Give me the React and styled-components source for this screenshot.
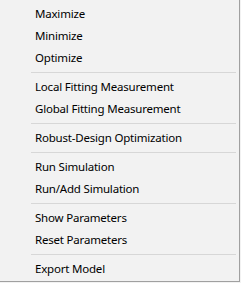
import React from "react";
import styled, { createGlobalStyle } from "styled-components";

const GlobalStyle = createGlobalStyle`
  html, body {
    margin: 0;
    padding: 0;
    background: #f2f2f2;
  }
`;

const Menu = styled.div`
  width: 240px;
  height: 282px;
  box-sizing: border-box;
  background: #f2f2f2;
  border-right: 1px solid #a0a0a0;
  border-bottom: 1px solid #a0a0a0;
  padding-top: 3px;
  font-family: "Noto Sans", "Open Sans", sans-serif;
  font-size: 11.5px;
  letter-spacing: -0.2px;
  color: #000;
`;

const Item = styled.div`
  height: 22px;
  box-sizing: border-box;
  display: flex;
  align-items: center;
  padding: 0 0 2px 35px;
  white-space: nowrap;
  cursor: default;
`;

const Separator = styled.div`
  height: 7px;
  display: flex;
  align-items: center;
  padding: 0 3px 0 31px;

  &::after {
    content: "";
    flex: 1;
    height: 1px;
    background: #d7d7d7;
  }
`;

const groups = [
  ["Maximize", "Minimize", "Optimize"],
  ["Local Fitting Measurement", "Global Fitting Measurement"],
  ["Robust-Design Optimization"],
  ["Run Simulation", "Run/Add Simulation"],
  ["Show Parameters", "Reset Parameters"],
  ["Export Model"],
];

function App() {
  return (
    <>
      <GlobalStyle />
      <Menu>
        {groups.map((group, i) => (
          <React.Fragment key={i}>
            {i > 0 && <Separator />}
            {group.map((label) => (
              <Item key={label}>{label}</Item>
            ))}
          </React.Fragment>
        ))}
      </Menu>
    </>
  );
}

export default App;
